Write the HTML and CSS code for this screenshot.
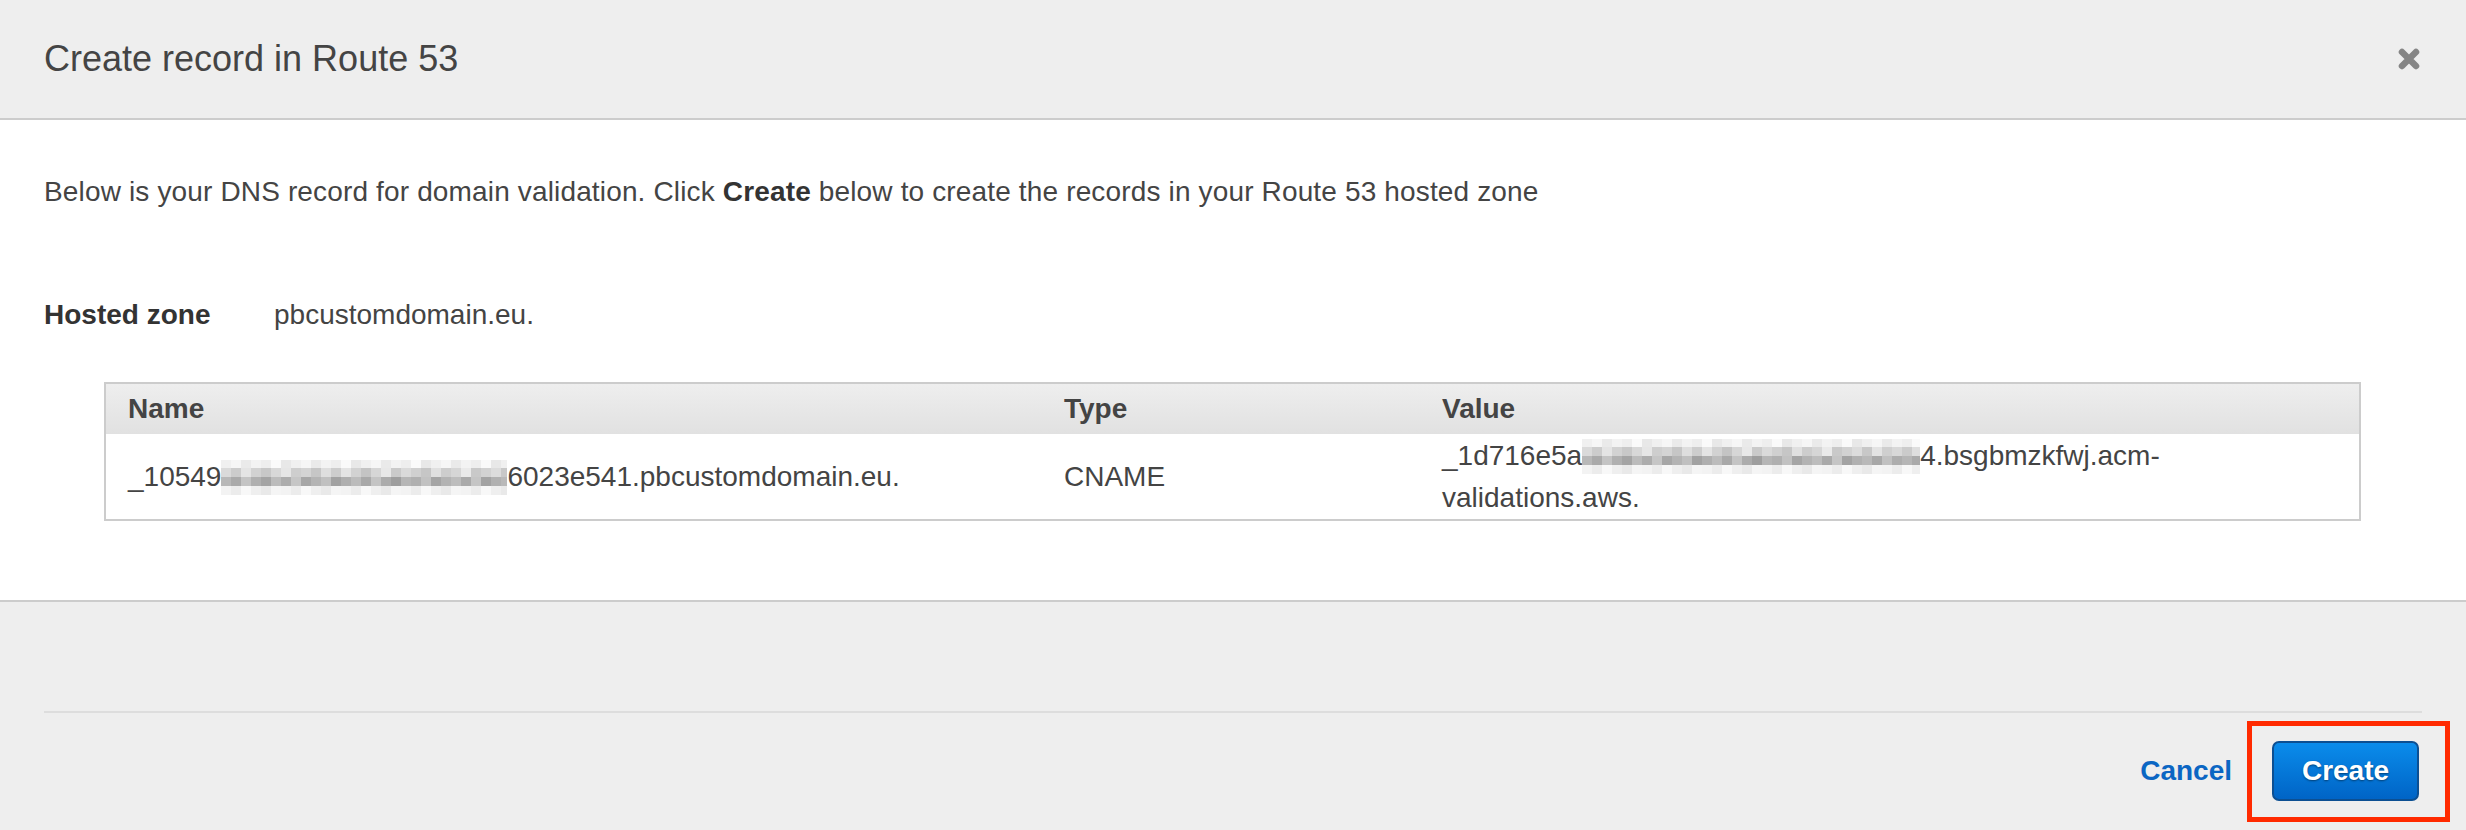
FILE: index.html
```html
<!DOCTYPE html>
<html lang="en">
<head>
<meta charset="utf-8">
<title>Create record in Route 53</title>
<link rel="stylesheet" href="styles.css">
</head>
<body>
<div class="modal">
    <div class="modal-header">
        <h2 class="modal-title">Create record in Route 53</h2>
        <span class="close-btn">
            <svg width="24" height="24" viewBox="0 0 24 24">
                <path d="M5 5 L19 19 M19 5 L5 19" stroke="#858585" stroke-width="6.5" stroke-linecap="round" fill="none"/>
            </svg>
        </span>
    </div>

    <div class="modal-body">
        <p class="intro">Below is your DNS record for domain validation. Click <b>Create</b> below to create the records in your Route 53 hosted zone</p>

        <div class="zone">
            <span class="zone-label">Hosted zone</span>
            <span class="zone-value">pbcustomdomain.eu.</span>
        </div>

        <div class="records-wrap">
            <table class="records">
                <colgroup>
                    <col class="col-name">
                    <col class="col-type">
                    <col>
                </colgroup>
                <thead>
                    <tr><th>Name</th><th>Type</th><th>Value</th></tr>
                </thead>
                <tbody>
                    <tr>
                        <td>_10549<span class="blur blur-name"></span>6023e541.pbcustomdomain.eu.</td>
                        <td>CNAME</td>
                        <td>_1d716e5a<span class="blur blur-value"></span>4.bsgbmzkfwj.acm-<br>validations.aws.</td>
                    </tr>
                </tbody>
            </table>
        </div>
    </div>

    <div class="modal-footer">
        <div class="footer-line"></div>
        <div class="footer-actions">
            <a class="cancel" href="#">Cancel</a>
            <span class="highlight"><button class="btn-primary">Create</button></span>
        </div>
    </div>
</div>
</body>
</html>
```

FILE: styles.css
```css
html, body {
    margin: 0;
    padding: 0;
    background: #eeeeee;
    color: #444444;
    font-family: "Liberation Sans", Arial, Helvetica, sans-serif;
    font-size: 28px;
}

.modal {
    height: 830px;
    overflow: hidden;
    background: #eeeeee;
}

/* header */
.modal-header {
    height: 118px;
    display: flex;
    align-items: center;
    justify-content: space-between;
    padding: 0 45px 0 44px;
    border-bottom: 2px solid #cccccc;
    background: #eeeeee;
}
.modal-title {
    margin: 0;
    font-size: 36px;
    font-weight: normal;
    color: #444444;
}
.close-btn {
    display: flex;
    width: 24px;
    height: 24px;
}

/* body */
.modal-body {
    background: #ffffff;
    padding: 52px 0 79px 0;
    border-bottom: 2px solid #cccccc;
}
.intro {
    margin: 0;
    padding: 0 44px;
    line-height: 40px;
    letter-spacing: 0.15px;
}
.intro b {
    color: #333333;
}
.zone {
    display: flex;
    padding: 0 44px;
    margin-top: 83px;
    line-height: 40px;
}
.zone-label {
    width: 230px;
    font-weight: bold;
    color: #333333;
}

.records-wrap {
    padding: 0 105px 0 104px;
    margin-top: 47px;
}
.records {
    width: 100%;
    table-layout: fixed;
    border-collapse: collapse;
    border: 2px solid #cccccc;
}
.col-name { width: 937px; }
.col-type { width: 378px; }
.records th {
    height: 50px;
    padding: 0 22px;
    text-align: left;
    font-weight: bold;
    color: #444444;
    background: linear-gradient(#eeeeee, #e1e1e1);
}
.records td {
    height: 85px;
    padding: 0 22px;
    line-height: 42px;
    vertical-align: middle;
    color: #444444;
    background: #ffffff;
}

/* pixelated censor blocks: four rows of 10px tiles */
.blur {
    display: inline-block;
    height: 35px;
    vertical-align: -9px;
    background:
        repeating-linear-gradient(90deg, #f0f0f0 0 10px, #f6f6f6 10px 20px, #eaeaea 20px 30px, #f3f3f3 30px 40px, #eeeeee 40px 50px, #fafafa 50px 60px, #e8e8e8 60px 70px) 0 0 / 100% 8px no-repeat,
        linear-gradient(90deg, #dadada 0 10px, #cccccc 10px 20px, #e4e4e4 20px 30px, #d2d2d2 30px 40px, #c8c8c8 40px 50px, #d8d8d8 50px 60px, #e6e6e6 60px 70px, #cecece 70px 80px, #d4d4d4 80px 90px, #c6c6c6 90px 100px, #dedede 100px 110px, #cdcdcd 110px 120px, #e4e4e4 120px 130px, #d2d2d2 130px 140px, #c4c4c4 140px 150px, #d6d6d6 150px 160px, #e8e8e8 160px 170px, #cacaca 170px 180px, #dadada 180px 190px, #d0d0d0 190px 200px, #c6c6c6 200px 210px, #e0e0e0 210px 220px, #cdcdcd 220px 230px, #d6d6d6 230px 240px, #eaeaea 240px 250px, #c9c9c9 250px 260px, #d2d2d2 260px 270px, #dcdcdc 270px 280px, #c8c8c8 280px 290px, #e3e3e3 290px 300px, #cfcfcf 300px 310px, #d8d8d8 310px 320px, #cbcbcb 320px 330px, #dedede 330px 340px) 0 8px / 100% 9px no-repeat,
        linear-gradient(90deg, #b8b8b8 0 10px, #aaaaaa 10px 20px, #c4c4c4 20px 30px, #b0b0b0 30px 40px, #a4a4a4 40px 50px, #bcbcbc 50px 60px, #adadad 60px 70px, #c6c6c6 70px 80px, #a7a7a7 80px 90px, #b4b4b4 90px 100px, #c0c0c0 100px 110px, #a2a2a2 110px 120px, #afafaf 120px 130px, #bcbcbc 130px 140px, #a9a9a9 140px 150px, #c4c4c4 150px 160px, #acacac 160px 170px, #9e9e9e 170px 180px, #b6b6b6 180px 190px, #b0b0b0 190px 200px, #c2c2c2 200px 210px, #a5a5a5 210px 220px, #b3b3b3 220px 230px, #bdbdbd 230px 240px, #aaaaaa 240px 250px, #c5c5c5 250px 260px, #a3a3a3 260px 270px, #b1b1b1 270px 280px, #b9b9b9 280px 290px, #a8a8a8 290px 300px, #c1c1c1 300px 310px, #adadad 310px 320px, #b6b6b6 320px 330px, #aaaaaa 330px 340px) 0 17px / 100% 9px no-repeat,
        repeating-linear-gradient(90deg, #f3f3f3 0 10px, #ececec 10px 20px, #f8f8f8 20px 30px, #efefef 30px 40px, #e9e9e9 40px 50px, #f5f5f5 50px 60px) 0 26px / 100% 9px no-repeat;
}
.blur-name { width: 286px; }
.blur-value { width: 338px; }

/* footer */
.modal-footer {
    padding: 109px 44px 0 44px;
}
.footer-line {
    border-top: 2px solid #dddddd;
}
.footer-actions {
    display: flex;
    justify-content: flex-end;
    align-items: center;
    gap: 40px;
    margin-top: 28px;
    padding-right: 3px;
}
.cancel {
    color: #0b66c3;
    font-weight: bold;
    text-decoration: none;
}
.highlight {
    position: relative;
    display: flex;
}
.highlight::after {
    content: "";
    position: absolute;
    top: -20px;
    bottom: -21px;
    left: -25px;
    right: -31px;
    border: 5px solid #ff2a00;
}
.btn-primary {
    width: 147px;
    height: 60px;
    padding: 0;
    font-family: inherit;
    font-size: 28px;
    font-weight: bold;
    color: #ffffff;
    text-shadow: 0 1px 2px rgba(0, 0, 0, 0.45);
    background: linear-gradient(#0a8ceb, #0064c6);
    border: 2px solid #0c4f92;
    border-radius: 7px;
}
```
